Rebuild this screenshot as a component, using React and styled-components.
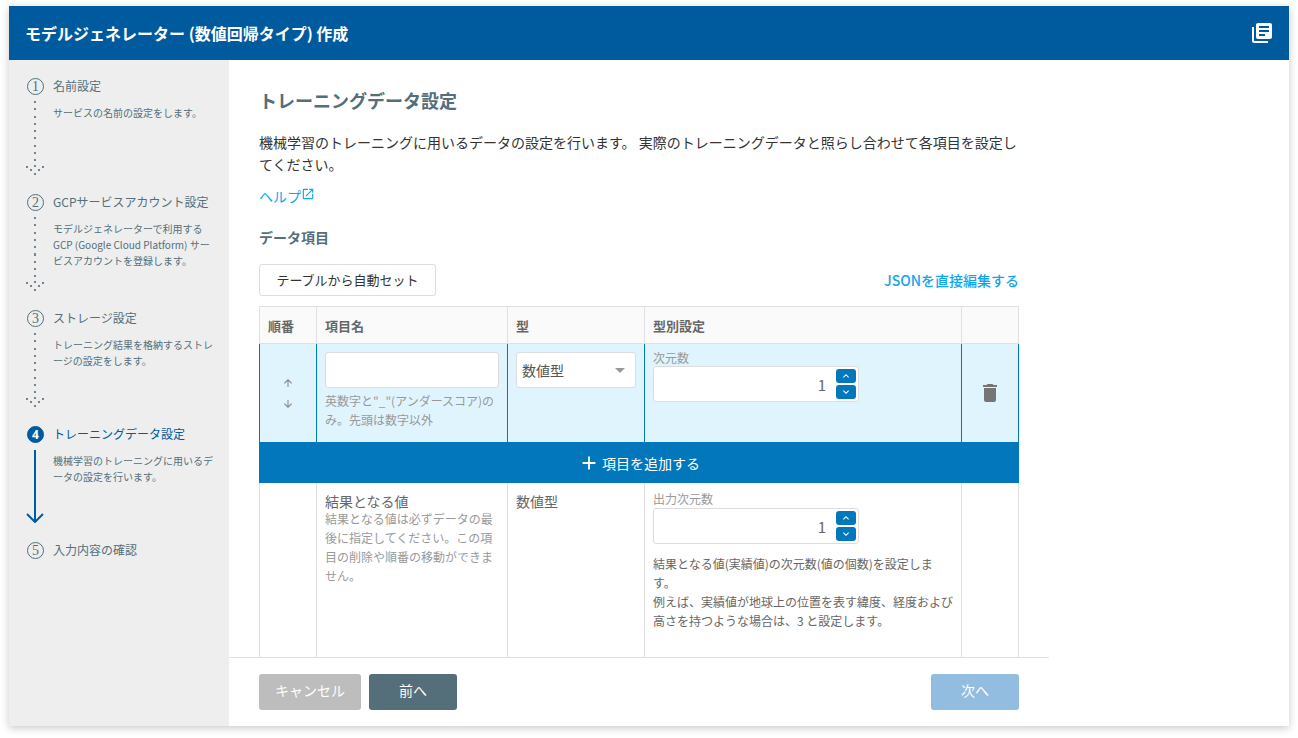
import React from 'react';
import styled, { createGlobalStyle } from 'styled-components';
import {
  MdLibraryBooks,
  MdOpenInNew,
  MdAdd,
  MdArrowUpward,
  MdArrowDownward,
  MdDelete,
  MdKeyboardArrowUp,
  MdKeyboardArrowDown,
} from 'react-icons/md';

const GlobalStyle = createGlobalStyle`
  html, body {
    margin: 0;
    padding: 0;
    height: 100%;
    background: #fff;
    overflow: hidden;
    font-family: "Noto Sans CJK JP", "Noto Sans", sans-serif;
  }
  * { box-sizing: border-box; }
`;

const Page = styled.div`
  width: 1298px;
  height: 738px;
  padding: 6px 9px 12px;
`;

const Dialog = styled.div`
  height: 720px;
  display: flex;
  flex-direction: column;
  background: #fff;
  box-shadow: 0 2px 8px rgba(0, 0, 0, 0.22);
`;

const Header = styled.header`
  height: 54px;
  flex: none;
  display: flex;
  align-items: center;
  justify-content: space-between;
  padding: 0 15px 0 16px;
  background: #005a9e;
  color: #fff;
`;

const HeaderTitle = styled.h1`
  margin: 0;
  font-size: 16px;
  font-weight: 700;
`;

const Body = styled.div`
  flex: 1;
  min-height: 0;
  display: flex;
`;

const Sidebar = styled.nav`
  width: 220px;
  flex: none;
  background: #eee;
  padding: 17px 0 0 18px;
`;

const Step = styled.div`
  height: 116px;
  display: grid;
  grid-template-columns: 16px 1fr;
  grid-template-rows: 20px 1fr;
  column-gap: 10px;
`;

const StepNumber = styled.div`
  width: 17px;
  height: 17px;
  margin-top: 1px;
  border-radius: 50%;
  border: 1px solid ${props => (props.active ? '#005a9e' : '#546e7a')};
  background: ${props => (props.active ? '#005a9e' : 'transparent')};
  color: ${props => (props.active ? '#fff' : '#546e7a')};
  font-size: ${props => (props.active ? '12px' : '14px')};
  font-weight: ${props => (props.active ? 700 : 400)};
  font-family: ${props => (props.active ? '"Noto Sans", sans-serif' : '"Liberation Serif", serif')};
  display: flex;
  align-items: center;
  justify-content: center;
  line-height: 1;
`;

const StepTitle = styled.div`
  font-size: 12px;
  line-height: 18px;
  color: ${props => (props.active ? '#005a9e' : '#546e7a')};
`;

const dots = 'repeating-linear-gradient(to bottom, #6f858f 0, #6f858f 2px, transparent 2px, transparent 7.3px)';

const StepLine = styled.div`
  position: relative;
  margin-left: 7px;
  margin-top: ${props => (props.active ? '5px' : '4px')};
  width: 2px;
  height: ${props => (props.active ? '72px' : '60px')};
  background: ${props => (props.active ? '#005a9e' : dots)};
`;

const ArrowHead = styled.svg`
  position: absolute;
  left: -9px;
  bottom: ${props => (props.active ? '-1px' : '-16px')};
`;

const StepText = styled.p`
  margin: 8px 0 0;
  font-size: 10px;
  line-height: 16px;
  color: #546e7a;
  width: 160px;
`;

const Main = styled.main`
  width: 820px;
  flex: none;
  display: flex;
  flex-direction: column;
`;

const Scroller = styled.div`
  flex: 1;
  min-height: 0;
  overflow: hidden;
  padding: 27px 30px 0;
`;

const PageTitle = styled.h2`
  margin: 0 0 18px;
  font-size: 18px;
  line-height: 26px;
  font-weight: 700;
  color: #546e7a;
`;

const Description = styled.p`
  margin: 0 0 8px;
  font-size: 14px;
  line-height: 22px;
  color: #333;
`;

const HelpLink = styled.a`
  display: inline-flex;
  align-items: flex-start;
  font-size: 14px;
  line-height: 22px;
  color: #12a5ec;
  svg { margin-top: 2px; }
`;

const SectionTitle = styled.h3`
  margin: 19px 0 16px;
  font-size: 14px;
  line-height: 22px;
  font-weight: 700;
  color: #546e7a;
`;

const Toolbar = styled.div`
  display: flex;
  align-items: center;
  justify-content: space-between;
  margin-bottom: 10px;
`;

const OutlineButton = styled.button`
  height: 32px;
  width: 177px;
  padding: 0 0 1px;
  border: 1px solid #ddd;
  border-radius: 3px;
  background: #fff;
  color: #333;
  font-family: inherit;
  font-size: 13px;
`;

const TextLink = styled.a`
  font-size: 14px;
  font-weight: 500;
  color: #12a5ec;
`;

const Table = styled.table`
  width: 759px;
  table-layout: fixed;
  border-collapse: collapse;
`;

const HeadCell = styled.th`
  height: 37px;
  padding: 0 8px;
  border: 1px solid #e0e0e0;
  background: #fafafa;
  color: #666;
  font-size: 13px;
  font-weight: 700;
  text-align: left;
`;

const ActiveCell = styled.td`
  height: 99px;
  padding: 8px;
  border: 1px solid #0377bc;
  background: #e0f4fe;
  vertical-align: top;
`;

const CenterCell = styled(ActiveCell)`
  vertical-align: middle;
  padding: 0;
`;

const MoveIcons = styled.div`
  display: flex;
  flex-direction: column;
  align-items: center;
  gap: 9px;
  color: #808080;
`;

const TrashWrap = styled.div`
  display: flex;
  justify-content: center;
  color: #757575;
`;

const TextInput = styled.input`
  display: block;
  width: 100%;
  height: 36px;
  border: 1px solid #ddd;
  border-radius: 3px;
  background: #fff;
`;

const Hint = styled.p`
  margin: 3px 0 0;
  font-size: 12px;
  line-height: 19px;
  color: #999;
`;

const SelectBox = styled.div`
  width: 120px;
  height: 36px;
  padding: 0 5px;
  display: flex;
  align-items: center;
  justify-content: space-between;
  border: 1px solid #ddd;
  border-radius: 3px;
  background: #fff;
  color: #555;
  font-size: 14px;
`;

const Caret = styled.span`
  width: 0;
  height: 0;
  margin-right: 5px;
  border-left: 5px solid transparent;
  border-right: 5px solid transparent;
  border-top: 5px solid #999;
`;

const FieldLabel = styled.div`
  font-size: 12px;
  line-height: 14px;
  margin: -1px 0 1px;
  color: #999;
`;

const ResultLabel = styled(FieldLabel)`
  margin-bottom: 2px;
`;

const NumberBox = styled.div`
  width: 206px;
  height: 36px;
  display: flex;
  align-items: center;
  justify-content: flex-end;
  gap: 10px;
  padding-right: 2px;
  border: 1px solid #ddd;
  border-radius: 3px;
  background: #fff;
  color: #666;
  font-size: 15px;
`;

const Spinner = styled.div`
  display: flex;
  flex-direction: column;
  gap: 2px;
`;

const SpinButton = styled.div`
  width: 20px;
  height: 14px;
  border-radius: 3px;
  background: #0377bc;
  color: #fff;
  display: flex;
  align-items: center;
  justify-content: center;
`;

const AddCell = styled.td`
  height: 40px;
  padding: 0;
  background: #0377bc;
  border: 1px solid #0377bc;
  color: #fff;
  font-size: 14px;
`;

const AddLabel = styled.div`
  display: flex;
  align-items: center;
  justify-content: center;
  gap: 2px;
`;

const ResultCell = styled.td`
  height: 200px;
  padding: 10px 8px 8px;
  border: 1px solid #e0e0e0;
  vertical-align: top;
`;

const ResultName = styled.div`
  font-size: 14px;
  line-height: 22px;
  margin-top: -3px;
  color: #666;
`;

const ResultHint = styled(Hint)`
  margin-top: -3px;
`;

const TypeText = styled.div`
  font-size: 14px;
  line-height: 22px;
  margin-top: -3px;
  color: #666;
`;

const ResultNote = styled.p`
  margin: 10px 0 0;
  font-size: 12px;
  line-height: 19px;
  color: #666;
`;

const Footer = styled.footer`
  height: 69px;
  flex: none;
  display: flex;
  align-items: center;
  justify-content: space-between;
  padding: 0 30px;
  border-top: 1px solid #e0e0e0;
`;

const FooterGroup = styled.div`
  display: flex;
  gap: 8px;
`;

const FooterButton = styled.button`
  width: ${props => props.w}px;
  height: 36px;
  padding: 0 0 4px;
  border: none;
  border-radius: 3px;
  background: ${props => props.bg};
  color: #fff;
  font-family: inherit;
  font-size: 14px;
`;

const steps = [
  { n: 1, title: '名前設定', text: 'サービスの名前の設定をします。' },
  { n: 2, title: 'GCPサービスアカウント設定', text: 'モデルジェネレーターで利用する GCP (Google Cloud Platform) サービスアカウントを登録します。' },
  { n: 3, title: 'ストレージ設定', text: 'トレーニング結果を格納するストレージの設定をします。' },
  { n: 4, title: 'トレーニングデータ設定', text: '機械学習のトレーニングに用いるデータの設定を行います。', active: true },
  { n: 5, title: '入力内容の確認' },
];

const DottedHead = () => (
  <ArrowHead width="20" height="16" viewBox="0 0 20 16">
    {[[1, 5], [9, 4], [17, 5], [5, 8], [13, 8], [9, 12]].map(([x, y]) => (
      <rect key={`${x}-${y}`} x={x} y={y} width="2" height="2" fill="#6f858f" />
    ))}
  </ArrowHead>
);

const SolidHead = () => (
  <ArrowHead active width="20" height="10" viewBox="0 0 20 10">
    <path d="M2 1l8 8 8-8" fill="none" stroke="#005a9e" strokeWidth="2" />
  </ArrowHead>
);

const NumberField = ({ value }) => (
  <NumberBox>
    {value}
    <Spinner>
      <SpinButton><MdKeyboardArrowUp size={12} /></SpinButton>
      <SpinButton><MdKeyboardArrowDown size={12} /></SpinButton>
    </Spinner>
  </NumberBox>
);

const App = () => {
  return (
    <Page>
      <GlobalStyle />
      <Dialog>
        <Header>
          <HeaderTitle>モデルジェネレーター (数値回帰タイプ) 作成</HeaderTitle>
          <MdLibraryBooks size={24} />
        </Header>
        <Body>
          <Sidebar>
            {steps.map((step, i) => (
              <Step key={step.n}>
                <StepNumber active={step.active}>{step.n}</StepNumber>
                <StepTitle active={step.active}>{step.title}</StepTitle>
                {i < steps.length - 1 && (
                  <>
                    <StepLine active={step.active}>
                      {step.active ? <SolidHead /> : <DottedHead />}
                    </StepLine>
                    <StepText>{step.text}</StepText>
                  </>
                )}
              </Step>
            ))}
          </Sidebar>
          <Main>
            <Scroller>
              <PageTitle>トレーニングデータ設定</PageTitle>
              <Description>
                機械学習のトレーニングに用いるデータの設定を行います。 実際のトレーニングデータと照らし合わせて各項目を設定してください。
              </Description>
              <HelpLink>ヘルプ<MdOpenInNew size={14} /></HelpLink>
              <SectionTitle>データ項目</SectionTitle>
              <Toolbar>
                <OutlineButton>テーブルから自動セット</OutlineButton>
                <TextLink>JSONを直接編集する</TextLink>
              </Toolbar>
              <Table>
                <colgroup>
                  <col width="57" />
                  <col width="191" />
                  <col width="137" />
                  <col width="317" />
                  <col width="57" />
                </colgroup>
                <thead>
                  <tr>
                    <HeadCell>順番</HeadCell>
                    <HeadCell>項目名</HeadCell>
                    <HeadCell>型</HeadCell>
                    <HeadCell>型別設定</HeadCell>
                    <HeadCell />
                  </tr>
                </thead>
                <tbody>
                  <tr>
                    <CenterCell>
                      <MoveIcons>
                        <MdArrowUpward size={12} />
                        <MdArrowDownward size={12} />
                      </MoveIcons>
                    </CenterCell>
                    <ActiveCell>
                      <TextInput />
                      <Hint>英数字と"_"(アンダースコア)のみ。先頭は数字以外</Hint>
                    </ActiveCell>
                    <ActiveCell>
                      <SelectBox>数値型<Caret /></SelectBox>
                    </ActiveCell>
                    <ActiveCell>
                      <FieldLabel>次元数</FieldLabel>
                      <NumberField value="1" />
                    </ActiveCell>
                    <CenterCell>
                      <TrashWrap><MdDelete size={24} /></TrashWrap>
                    </CenterCell>
                  </tr>
                  <tr>
                    <AddCell colSpan={5}>
                      <AddLabel><MdAdd size={22} />項目を追加する</AddLabel>
                    </AddCell>
                  </tr>
                  <tr>
                    <ResultCell />
                    <ResultCell>
                      <ResultName>結果となる値</ResultName>
                      <ResultHint>結果となる値は必ずデータの最後に指定してください。この項目の削除や順番の移動ができません。</ResultHint>
                    </ResultCell>
                    <ResultCell>
                      <TypeText>数値型</TypeText>
                    </ResultCell>
                    <ResultCell>
                      <ResultLabel>出力次元数</ResultLabel>
                      <NumberField value="1" />
                      <ResultNote>
                        結果となる値(実績値)の次元数(値の個数)を設定します。<br />
                        例えば、実績値が地球上の位置を表す緯度、経度および高さを持つような場合は、3 と設定します。
                      </ResultNote>
                    </ResultCell>
                    <ResultCell />
                  </tr>
                </tbody>
              </Table>
            </Scroller>
            <Footer>
              <FooterGroup>
                <FooterButton w={102} bg="#bdbdbd">キャンセル</FooterButton>
                <FooterButton w={88} bg="#546e7a">前へ</FooterButton>
              </FooterGroup>
              <FooterButton w={88} bg="#93bde0">次へ</FooterButton>
            </Footer>
          </Main>
        </Body>
      </Dialog>
    </Page>
  );
};

export default App;
